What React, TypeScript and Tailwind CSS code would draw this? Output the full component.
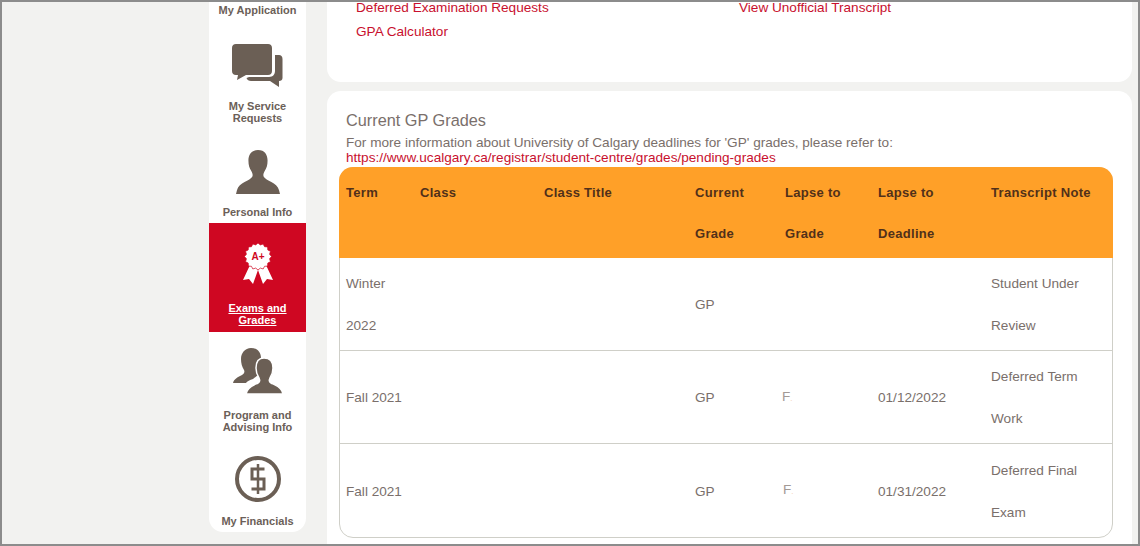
import React from 'react'

const Chat = () => (
  <svg width="51" height="44" viewBox="0 0 51 44" fill="#6b5f55">
    <path d="M4 0h32c2.500 0 4 1.500 4 4v23c0 2.500-1.500 4-4 4H14l-9 5 1-5H4c-2.500 0-4-1.500-4-4V4c0-2.500 1.500-4 4-4z" />
    <path d="M43 11h4c2 0 3.500 1.500 3.500 4v19c0 2-1.500 3-3.500 3v6l-9-6H19c-2 0-4-1-4.500-3l2.500-1h20c4 0 6-3 6-6z" />
  </svg>
)

const Person = () => (
  <svg width="44" height="44" viewBox="0 0 46 46" fill="#6b5f55">
    <path d="M23 0c7 0 10 5 10 11 0 5-1 8-3 11-1 2-2 4-1 6 2 4 14 6 16 14l1 4H0l1-4c2-8 14-10 16-14 1-2 0-4-1-6-2-3-3-6-3-11C13 5 16 0 23 0z" />
  </svg>
)

// scalloped edge of the rosette
const rosette = Array.from({ length: 32 }, (_, i) => {
  const a = (i / 32) * Math.PI * 2
  const r = i % 2 ? 11.8 : 13.5
  return `${(15 + r * Math.sin(a)).toFixed(2)},${(13.5 - r * Math.cos(a)).toFixed(2)}`
}).join(' ')

const Ribbon = () => (
  <svg width="30" height="41" viewBox="0 0 30 41">
    <path d="M7 22 0 37l6-1 4 5 5-14 5 14 4-5 6 1-7-15z" fill="#fff" />
    <polygon points={rosette} fill="#fff" stroke="#cf0722" strokeWidth="0.7" />
    <text x="15" y="17" textAnchor="middle" fontSize="10" fontWeight="700" fill="#cf0722" fontFamily="Liberation Sans, sans-serif">
      A+
    </text>
  </svg>
)

const People = () => (
  <svg width="50" height="46" viewBox="0 0 50 46" fill="#6b5f55">
    <path d="M18 0c6 0 10 4 10 10 0 4-1 8-3 11-1 2-1 4 0 6l-5 4c-3 1-6 2-7 4H0c1-4 5-6 9-8 2-1 3-3 2-5-2-3-3-7-3-11C8 5 12 0 18 0z" />
    <path
      d="M31 10c6 0 9 4 9 10 0 4-1 7-3 10-1 2-1 4 1 5 4 2 11 4 12 11H13c1-7 8-9 12-11 2-1 2-3 1-5-2-3-3-6-3-10 0-6 2-10 8-10z"
      stroke="#fff"
      strokeWidth="1.500"
    />
  </svg>
)

const Dollar = () => (
  <svg width="46" height="46" viewBox="0 0 46 46" fill="none" stroke="#6b5f55">
    <circle cx="23" cy="23" r="21" strokeWidth="4" />
    <path d="M29.500 13H17v10h12v10H16.500" strokeWidth="3" />
    <path d="M23 8v30" strokeWidth="2.500" />
  </svg>
)

const NavItem: React.FC<{ icon: React.ReactNode; lines: string[]; active?: boolean; className: string }> = ({
  icon,
  lines,
  active,
  className,
}) => (
  <div className={`flex flex-col items-center ${active ? 'bg-[#cf0722] text-white underline' : 'text-[#6b6058]'} ${className}`}>
    {icon}
    <div className="mt-auto text-center text-[11px] font-bold leading-[12px]">
      {lines.map(l => (
        <div key={l}>{l}</div>
      ))}
    </div>
  </div>
)

const rows = [
  { term: ['Winter', '2022'], grade: 'GP', lapse: '', lapseCls: '', deadline: '', note: ['Student Under', 'Review'] },
  { term: ['Fall 2021'], grade: 'GP', lapse: 'F', lapseCls: '-ml-[3px]', deadline: '01/12/2022', note: ['Deferred Term', 'Work'] },
  { term: ['Fall 2021'], grade: 'GP', lapse: 'F', lapseCls: '-ml-[2px] -mt-[2px]', deadline: '01/31/2022', note: ['Deferred Final', 'Exam'] },
]

const cols = 'grid grid-cols-[74px_124px_151px_90px_93px_113px_1fr]'

export default function App() {
  return (
    <div className="box-border flex h-[546px] w-[1140px] overflow-hidden border-2 border-[#8c8c8c] bg-[#f2f2f0] font-['Liberation_Sans',Arial,sans-serif] text-[13.600px] text-[#7a6f6b]">
      <div className="ml-[207px] flex h-[530px] w-[97px] shrink-0 flex-col rounded-b-[14px] bg-white">
        <div className="h-[16px] text-center text-[11px] font-bold leading-[17px] text-[#6b6058]">My Application</div>
        <NavItem icon={<Chat />} lines={['My Service', 'Requests']} className="h-[106px] pt-[26px]" />
        <NavItem icon={<Person />} lines={['Personal Info']} className="h-[99px] pt-[26px] pb-[5px]" />
        <NavItem icon={<Ribbon />} lines={['Exams and', 'Grades']} active className="h-[109px] pt-[20px] pb-[6px]" />
        <NavItem icon={<People />} lines={['Program and', 'Advising Info']} className="h-[101px] pt-[16px]" />
        <NavItem icon={<Dollar />} lines={['My Financials']} className="h-[99px] pt-[23px] pb-[5px]" />
      </div>

      <div className="ml-[21px] flex w-[805px] shrink-0 flex-col gap-[9px]">
        <div className="h-[80px] rounded-b-[14px] bg-white pl-[29px] text-[#c8102e]">
          <div className="-mt-[6px] grid grid-cols-[383px_1fr] leading-[23.500px]">
            <span>Deferred Examination Requests</span>
            <span>View Unofficial Transcript</span>
            <span>GPA Calculator</span>
          </div>
        </div>

        <div className="flex-1 rounded-t-[14px] bg-white px-[12px] pt-[19px]">
          <div className="px-[7px]">
            <div className="text-[16.300px] leading-[20px]">Current GP Grades</div>
            <div className="mt-[5px] leading-[15px]">For more information about University of Calgary deadlines for 'GP' grades, please refer to:</div>
            <div className="mt-px leading-[14px] text-[#c8102e]">https://www.ucalgary.ca/registrar/student-centre/grades/pending-grades</div>
          </div>
          <div className="mt-[2px] w-[774px] rounded-[14px] border border-[#cfcfc8]">
            <div className={`${cols} -mx-px -mt-px h-[91px] rounded-t-[14px] bg-[#ffa028] pl-[7px] pt-[5px] text-[13px] font-bold leading-[41px] tracking-[0.3px] text-[#51301a]`}>
              <div>Term</div>
              <div>Class</div>
              <div>Class Title</div>
              <div>Current<br />Grade</div>
              <div>Lapse to<br />Grade</div>
              <div>Lapse to<br />Deadline</div>
              <div>Transcript Note</div>
            </div>
            {rows.map((r, i) => (
              <div key={i} className={`${cols} h-[93px] items-center pl-[6px] pt-[2px] leading-[42px] ${i < 2 ? 'border-b border-[#cfcfc8]' : ''}`}>
                <div>{r.term.map(t => <div key={t}>{t}</div>)}</div>
                <div />
                <div />
                <div>{r.grade}</div>
                <div className={`text-[#a39a96] ${r.lapseCls}`}>
                  {r.lapse}
                  {r.lapse && <span className="text-[8px] text-[#f3cda8]">.</span>}
                </div>
                <div>{r.deadline}</div>
                <div>{r.note.map(t => <div key={t}>{t}</div>)}</div>
              </div>
            ))}
          </div>
        </div>
      </div>
    </div>
  )
}
